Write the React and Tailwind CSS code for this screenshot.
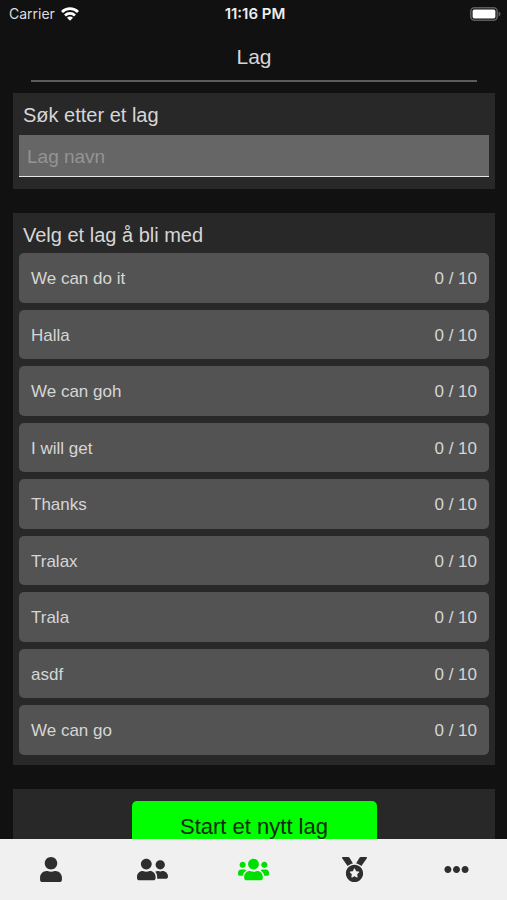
import { FaUser, FaUserFriends, FaUsers, FaMedal, FaEllipsisH } from "react-icons/fa";

const teams = [
  "We can do it",
  "Halla",
  "We can goh",
  "I will get",
  "Thanks",
  "Tralax",
  "Trala",
  "asdf",
  "We can go",
];

const tabs = [
  { label: "Profil", Icon: FaUser, size: "h-[25px] w-[22px]" },
  { label: "Venner", Icon: FaUserFriends, size: "h-[25px] w-[31px]" },
  { label: "Lag", Icon: FaUsers, size: "h-[25px] w-[31px]", active: true },
  { label: "Medaljer", Icon: FaMedal, size: "h-[25px] w-[25px]" },
  { label: "Mer", Icon: FaEllipsisH, size: "h-[25px] w-[25px]" },
];

function StatusBar() {
  return (
    <div className="grid h-7 shrink-0 grid-cols-3 items-center pr-[6px] pl-[9px] font-['Inter',sans-serif] text-[14px] leading-5 text-[#dedede]">
      <div className="flex items-center gap-[6px]">
        <span>Carrier</span>
        <svg viewBox="0 0 18 14" className="h-[14px] w-[18px]" fill="none" stroke="#ffffff" strokeWidth="2.8" aria-hidden="true">
          <path d="M1 5a11.4 11.4 0 0 1 16 0" />
          <path d="M4 8.4a7.1 7.1 0 0 1 10 0" />
          <path d="M9 13.7 6 10.7a4.2 4.2 0 0 1 6 0Z" fill="#ffffff" stroke="none" />
        </svg>
      </div>
      <span className="text-center text-[15px] font-semibold text-[#eeeeee]">11:16 PM</span>
      <svg viewBox="0 0 31 14" className="h-[14px] w-[31px] justify-self-end" aria-hidden="true">
        <rect x="0.8" y="0.8" width="26.4" height="12.4" rx="3.6" fill="none" stroke="#5c5c5c" strokeWidth="1.6" />
        <rect x="2.6" y="2.6" width="22.8" height="8.8" rx="1.6" fill="#ffffff" />
        <path d="M28.6 4.6c2.6.8 2.6 4 0 4.8Z" fill="#5c5c5c" />
      </svg>
    </div>
  );
}

export default function App() {
  return (
    <div className="flex h-screen flex-col bg-[#111111] font-['Liberation_Sans',Arial,sans-serif] text-[#d6d6d6]">
      <StatusBar />
      <main className="min-h-0 flex-1 overflow-y-auto pr-3 pl-[13px] [scrollbar-width:none]">
        <h1 className="mx-[18px] mb-[11px] border-b-2 border-[#5c5c5c] pt-[15px] pb-[9px] text-center text-[21px] leading-7">Lag</h1>

        <section className="mb-6 bg-[#282828] px-[6px] pt-2 pb-3">
          <label htmlFor="team-search" className="block px-1 pb-[6px] text-[20px] leading-7">
            Søk etter et lag
          </label>
          <input
            id="team-search"
            type="text"
            placeholder="Lag navn"
            className="block h-[42px] w-full border-b border-[#e6e6e6] bg-[#666666] px-2 pt-[2px] text-[19px] outline-none placeholder:text-[#949494]"
          />
        </section>

        <section className="mb-6 bg-[#282828] px-[6px] pt-2 pb-[10px]">
          <h2 className="px-1 pb-1 text-[20px] leading-7">Velg et lag å bli med</h2>
          <ul className="grid h-[502px] auto-rows-fr gap-[7px]">
            {teams.map((name) => (
              <li key={name}>
                <button type="button" className="flex h-full w-full items-center justify-between rounded-[5px] bg-[#535353] px-3 pt-[2px] text-[17px]">
                  <span>{name}</span>
                  <span>0 / 10</span>
                </button>
              </li>
            ))}
          </ul>
        </section>

        <section className="flex justify-center bg-[#282828] py-3">
          <button type="button" className="h-[50px] w-[245px] rounded-[5px] bg-[#00ff00] text-[22px] text-[#122b12]">
            Start et nytt lag
          </button>
        </section>
      </main>

      <nav className="grid h-[61px] shrink-0 grid-cols-5 bg-[#f0f0f0]">
        {tabs.map(({ label, Icon, size, active }) => (
          <button
            key={label}
            type="button"
            aria-label={label}
            aria-current={active ? "page" : undefined}
            className={active ? "flex items-center justify-center text-[#00e000]" : "flex items-center justify-center text-[#2e2e2e]"}
          >
            <Icon className={size} />
          </button>
        ))}
      </nav>
    </div>
  );
}
